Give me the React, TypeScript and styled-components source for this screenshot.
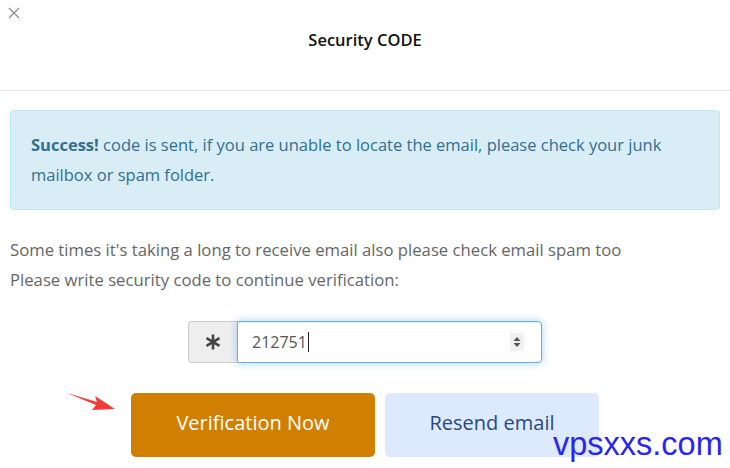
import styled, { createGlobalStyle } from 'styled-components'

const GlobalStyle = createGlobalStyle`
  html, body {
    margin: 0;
    padding: 0;
    background: #fff;
  }
  body {
    font-family: "Open Sans", "Noto Sans", sans-serif;
  }
`

export default function App() {
  return (
    <>
      <GlobalStyle />
      <Modal>
        <Header>
          <Close aria-label="close">
            <svg width="12" height="12" viewBox="0 0 12 12">
              <path d="M1 1 L11 11 M11 1 L1 11" stroke="#8a8a8a" strokeWidth="1.2" />
            </svg>
          </Close>
          <Title>Security CODE</Title>
        </Header>
        <Body>
          <Alert>
            <strong>Success!</strong> code is sent, if you are unable to locate the email, please check your junk mailbox or spam folder.
          </Alert>
          <Note>
            Some times it's taking a long to receive email also please check email spam too
            <br />
            Please write security code to continue verification:
          </Note>
          <InputGroup>
            <Addon>
              <svg width="18" height="18" viewBox="0 0 18 18">
                <path d="M9 1.5 V16.5 M2.5 5.2 L15.5 12.8 M15.5 5.2 L2.5 12.8" stroke="#444" strokeWidth="2.6" />
              </svg>
            </Addon>
            <CodeField>
              <CodeText>212751<Caret /></CodeText>
              <Spinner>
                <svg width="8" height="12" viewBox="0 0 8 12">
                  <path d="M4 1 L7.5 5 H0.5 Z M4 11 L7.5 7 H0.5 Z" fill="#555" />
                </svg>
              </Spinner>
            </CodeField>
          </InputGroup>
          <Actions>
            <Arrow width="52" height="24" viewBox="0 0 52 24">
              <path d="M2 2 L32 11 L30 5 L50 18 L27 19 L31 14 Z" fill="#f63a3a" />
            </Arrow>
            <Button $variant="primary">Verification Now</Button>
            <Button $variant="secondary">Resend email</Button>
          </Actions>
        </Body>
        <Watermark>vpsxxs.com</Watermark>
      </Modal>
    </>
  )
}

const Modal = styled.div`
  position: relative;
  width: 730px;
  height: 468px;
  overflow: hidden;
  background: #fff;
`

const Header = styled.div`
  position: relative;
  height: 90px;
  border-bottom: 1px solid #e5e5e5;
  display: flex;
  align-items: flex-start;
  justify-content: center;
`

const Close = styled.button`
  position: absolute;
  left: 8px;
  top: 7px;
  padding: 0;
  border: 0;
  background: none;
  line-height: 0;
`

const Title = styled.h4`
  margin: 29px 0 0;
  font-size: 16.5px;
  font-weight: 600;
  color: #111;
  line-height: 22px;
`

const Body = styled.div`
  padding: 19px 10px 0;
  display: flex;
  flex-direction: column;
`

const Alert = styled.div`
  background: #d9edf7;
  border: 1px solid #bce8f1;
  border-radius: 4px;
  color: #31708f;
  font-size: 16.5px;
  line-height: 30px;
  padding: 19px 20px 19px 20px;

  strong {
    font-weight: 700;
  }
`

const Note = styled.p`
  margin: 25px 0 0;
  color: #666;
  font-size: 16.7px;
  line-height: 30px;
`

const InputGroup = styled.div`
  display: flex;
  align-self: center;
  margin: 26px 0 0;
  width: 354px;
  height: 42px;
`

const Addon = styled.div`
  width: 48px;
  flex: none;
  display: flex;
  align-items: center;
  justify-content: center;
  background: #eee;
  border: 1px solid #ccc;
  border-right: 0;
  border-radius: 4px 0 0 4px;
`

const CodeField = styled.div`
  flex: 1;
  display: flex;
  align-items: center;
  justify-content: space-between;
  padding: 0 17px 0 14px;
  border: 1px solid #66afe9;
  border-radius: 0 4px 4px 0;
  box-shadow: inset 0 1px 1px rgba(0, 0, 0, 0.075), 0 0 8px rgba(102, 175, 233, 0.6);
  background: #fff;
`

const CodeText = styled.span`
  display: flex;
  align-items: center;
  font-size: 16px;
  color: #555;
`

const Caret = styled.span`
  display: inline-block;
  width: 1px;
  height: 20px;
  margin-left: 1px;
  background: #222;
`

const Spinner = styled.span`
  width: 14px;
  height: 18px;
  display: flex;
  align-items: center;
  justify-content: center;
  background: #f0f0f0;
`

const Actions = styled.div`
  position: relative;
  display: flex;
  gap: 10px;
  margin: 30px 0 0 121px;
`

const Arrow = styled.svg`
  position: absolute;
  left: -66px;
  top: -2px;
`

const Button = styled.button<{ $variant: 'primary' | 'secondary' }>`
  height: 64px;
  border: 0;
  border-radius: 5px;
  font-family: inherit;
  font-size: 20px;
  padding: 0 0 5px;
  width: ${p => (p.$variant === 'primary' ? '244px' : '214px')};
  background: ${p => (p.$variant === 'primary' ? '#d17f00' : '#dde9fc')};
  color: ${p => (p.$variant === 'primary' ? '#fff' : '#274a7e')};
`

const Watermark = styled.div`
  position: absolute;
  left: 553px;
  top: 424px;
  font-family: "Liberation Sans", Arial, sans-serif;
  font-size: 32.5px;
  line-height: 40px;
  color: #2b24f0;
`
